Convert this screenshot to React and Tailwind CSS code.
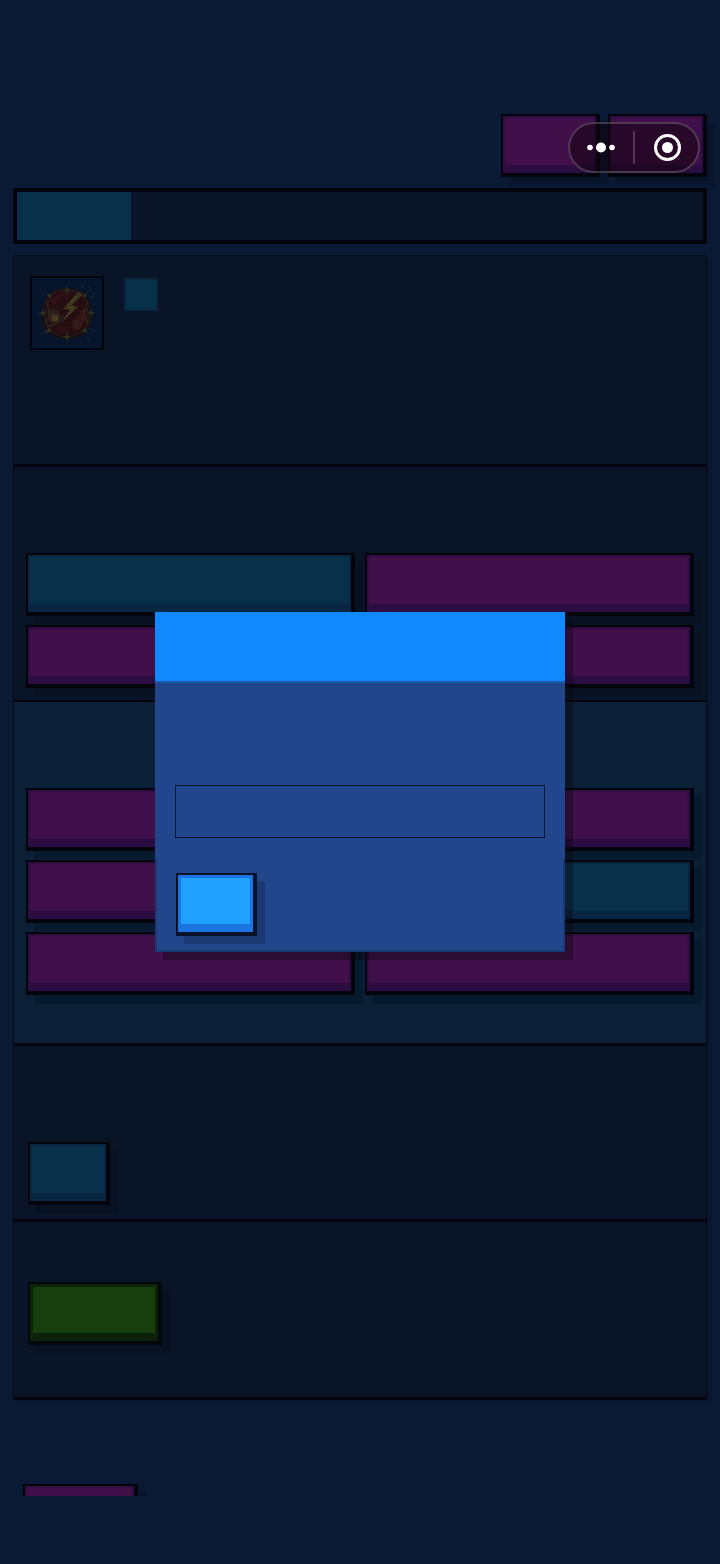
import { useState } from "react";

const tones = {
  purple: "border-[#03040c] bg-[#410f4a] shadow-[inset_2px_2px_1px_#300e40,inset_-2px_-8px_1px_#2c0d42,8px_8px_1px_rgba(2,4,12,0.2)]",
  blue: "border-[#03040c] bg-[#09304a] shadow-[inset_2px_2px_1px_#08273f,inset_-2px_-8px_1px_#082542,8px_8px_1px_rgba(2,4,12,0.2)]",
  green: "border-[#03060a] bg-[#163f0d] shadow-[inset_3px_3px_0_#0d2309,inset_-3px_-8px_0_#0d2009,8px_8px_1px_rgba(2,4,12,0.2)]",
  bright: "border-[#081228] bg-[#20a0ff] shadow-[inset_3px_3px_0_#1c74e0,inset_-3px_-8px_0_#1c74e0,8px_8px_0_rgba(10,20,50,0.28)]",
};

const firstRow = ["blue", "purple", "purple", "purple"];
const secondRow = ["purple", "purple", "purple", "blue", "purple", "purple"];

function PixelButton({ tone, label, className = "", onClick }) {
  return (
    <button
      type="button"
      aria-label={label}
      onClick={onClick}
      className={`block h-[63px] border-t-2 border-r-4 border-b-4 border-l-2 ${tones[tone]} ${className}`}
    />
  );
}

function Emblem() {
  return (
    <svg viewBox="0 0 60 60" className="h-[60px] w-[60px]" aria-hidden="true">
      <path d="M14 9 Q30 1 46 9 Q59 22 54 43 Q46 56 30 56 Q13 56 6 43 Q1 21 14 9Z" fill="#191116" />
      <path d="M16 10 Q30 4 44 10 Q53 23 51 42 Q42 53 30 54 Q16 53 9 42 Q6 23 16 10Z" fill="#240e11" stroke="#242019" strokeWidth="1" />
      <path d="M12 19 Q19 10 28 11 L18 22Z M35 37 L48 25 L48 39 L37 49Z" fill="#311316" />
      <path d="M22 42 L34 44 L30 51 L18 48Z M26 9 L36 9 L30 18Z" fill="#2c1114" />
      <path d="M9 18 Q15 29 9 41 M51 18 Q45 29 51 41" fill="none" stroke="#30231a" strokeWidth="1.5" />
      <path d="M41 9 L26 26 L33 27 L24 40 L41 24 L35 22 L46 11Z" fill="#3c351e" />
      <path d="M40 13 L30 24 L36 25 L29 34" fill="none" stroke="#4b4226" strokeWidth="1" />
      <circle cx="17" cy="34" r="6" fill="#2f211b" />
      <circle cx="18" cy="35" r="3.5" fill="#473824" />
      <path d="M10 43 Q23 43 26 32 M11 30 Q16 24 22 29" fill="none" stroke="#2a221b" strokeWidth="2" />
      <circle cx="40" cy="42" r="4" fill="none" stroke="#37241b" />
      <path d="M38 42 L40 40 L42 42 L40 44Z M44 29 L48 28 M43 33 L48 32 M44 36 L48 36" fill="none" stroke="#3c291d" />
      <path
        d="M30 2 L31 6 L34 7 L31 8 L30 12 L29 8 L26 7 L29 6Z M30 49 L31 53 L34 54 L31 55 L30 59 L29 55 L26 54 L29 53Z M1 30 L5 29 L6 26 L7 29 L10 30 L7 31 L6 34 L5 31Z M50 30 L53 29 L54 26 L55 29 L59 30 L55 31 L54 34 L53 31Z M10 10 L15 12 L12 15Z M50 10 L45 12 L48 15Z M8 50 L12 45 L15 48Z M51 50 L48 45 L45 48Z"
        fill="#323221"
      />
      <path d="M44 5 L48 2 M50 9 L55 5 M54 14 L57 13 M8 12 L5 10 M49 54 L53 57 M54 45 L58 49 M9 48 L5 51 M51 5 L54 2 M56 20 L58 22" stroke="#1b2733" strokeWidth="1" />
    </svg>
  );
}

function Capsule() {
  return (
    <div className="fixed top-[122px] right-5 z-20 flex h-[51px] w-[132px] items-center rounded-full border-2 border-white/20 bg-[#12040f]/55">
      <button type="button" aria-label="More" className="flex h-full flex-1 items-center justify-center">
        <svg viewBox="0 0 30 12" className="h-3 w-[30px]" fill="#fff">
          <circle cx="3" cy="5.5" r="2.8" />
          <circle cx="14" cy="5.5" r="5" />
          <circle cx="25" cy="5.5" r="2.8" />
        </svg>
      </button>
      <span className="h-[33px] w-0.5 bg-white/20" />
      <button type="button" aria-label="Close" className="flex h-full flex-1 items-center justify-center">
        <svg viewBox="0 0 28 28" className="h-7 w-7">
          <circle cx="14.5" cy="13.5" r="12" fill="none" stroke="#fff" strokeWidth="3" />
          <circle cx="14.5" cy="13.5" r="5.5" fill="#fff" />
        </svg>
      </button>
    </div>
  );
}

function Dialog({ onClose }) {
  const [value, setValue] = useState("");

  return (
    <div className="fixed inset-0 z-10 flex items-center justify-center">
      <div role="dialog" aria-label="Input" className="w-[410px] bg-[#21468b] shadow-[8px_8px_0_rgba(10,8,18,0.4)]">
        <div className="h-[71px] border-b-2 border-[#1d5ba9] bg-[#1089ff]" />
        <div className="px-5 pt-[102px] pb-5">
          <input
            type="text"
            aria-label="Value"
            value={value}
            onChange={(e) => setValue(e.target.value)}
            className="block h-[53px] w-full border border-[#071633] bg-transparent px-3 font-['Liberation_Sans',sans-serif] text-white outline-none"
          />
        </div>
        <div className="border-2 border-t-0 border-[#1b3a74] px-[19px] pt-[15px] pb-3.5">
          <PixelButton tone="bright" label="Confirm" className="w-[81px]" onClick={onClose} />
        </div>
      </div>
    </div>
  );
}

function App() {
  const [open, setOpen] = useState(true);

  return (
    <div className="min-h-screen bg-[#0a1934] px-[13px] pt-[114px] pb-[68px]">
      <header className="flex justify-end gap-2">
        <PixelButton tone="purple" label="Action 1" className="w-[99px]" />
        <PixelButton tone="purple" label="Action 2" className="w-[99px]" />
      </header>

      <div className="mt-[11px] h-14 border-4 border-[#02040c] bg-[#091426]">
        <div className="h-full w-1/6 bg-[#09304a]" />
      </div>

      <main className="mt-[11px] border border-[#030812] bg-[#091427] shadow-[4px_4px_2px_rgba(0,0,0,0.12)]">
        <section className="flex h-[211px] gap-5 border-b-3 border-[#03060f] px-4 pt-5">
          <div className="flex h-[74px] w-[74px] items-center justify-center border-2 border-[#02040c] bg-[#06142c]">
            <Emblem />
          </div>
          <div className="mt-0.5 h-[33px] w-[34px] border-2 border-[#08273c] bg-[#09304a]" />
        </section>

        <section className="border-b-2 border-[#03060f] px-3 pt-[86px] pb-3">
          <div className="grid grid-cols-2 gap-x-2.5 gap-y-[9px]">
            {firstRow.map((tone, index) => (
              <PixelButton key={index} tone={tone} label={`Option ${index + 1}`} />
            ))}
          </div>
        </section>

        <section className="border-b-3 border-[#03060f] bg-[#0b2037] px-3 pt-[86px] pb-12">
          <div className="grid grid-cols-2 gap-x-2.5 gap-y-[9px]">
            {secondRow.map((tone, index) => (
              <PixelButton key={index} tone={tone} label={`Choice ${index + 1}`} />
            ))}
          </div>
        </section>

        <section className="border-b-3 border-[#03060f] px-3.5 pt-24 pb-3.5">
          <PixelButton tone="blue" label="Edit" className="w-[82px]" onClick={() => setOpen(true)} />
        </section>

        <section className="border-b-2 border-[#03060f] px-3.5 pt-[60px] pb-[52px]">
          <PixelButton tone="green" label="Start" className="w-[134px]" />
        </section>
      </main>

      <footer className="mt-[84px] h-3 overflow-hidden px-2.5">
        <PixelButton tone="purple" label="Back" className="w-[115px]" />
      </footer>

      <Capsule />
      {open && <Dialog onClose={() => setOpen(false)} />}
    </div>
  );
}

export default App;
